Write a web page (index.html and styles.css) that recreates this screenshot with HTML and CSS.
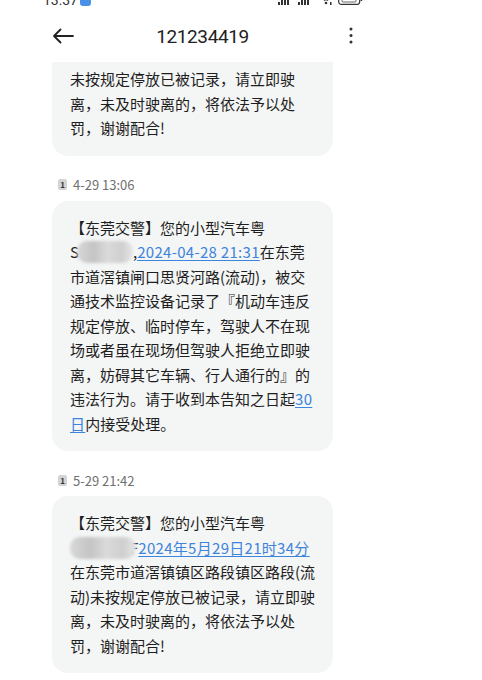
FILE: index.html
```html
<!DOCTYPE html>
<html lang="zh-CN">
  <head>
    <meta charset="UTF-8" />
    <meta name="viewport" content="width=device-width, initial-scale=1.0" />
    <title>121234419</title>
    <link rel="stylesheet" href="styles.css">
  </head>
  <body>
    <div class="screen">
      <div class="status">
        <span class="time">13:37</span>
        <span class="notif"></span>
        <span class="grow"></span>
        <svg class="sig" width="38" height="12" viewBox="0 0 38 12">
          <rect x="0" y="9" width="2" height="3" />
          <rect x="3" y="7" width="2" height="5" />
          <rect x="6" y="4" width="2" height="8" />
          <rect x="9" y="1" width="2" height="11" />
          <rect x="20" y="9" width="2" height="3" />
          <rect x="23" y="7" width="2" height="5" />
          <rect x="26" y="4" width="2" height="8" />
          <rect x="29" y="1" width="2" height="11" />
        </svg>
        <svg class="wifi" width="12" height="12" viewBox="0 0 12 12">
          <path d="M1 5 Q5 1 9 5 M3 7.5 Q5 5.5 7 7.5" fill="none" stroke="#333" stroke-width="1.5" />
          <circle cx="5" cy="10" r="1.3" fill="#333" />
          <rect x="9" y="9" width="1.5" height="3" fill="#333" />
        </svg>
        <svg class="batt" width="25" height="12" viewBox="0 0 25 12">
          <rect x="0.7" y="0.7" width="21" height="10.6" rx="2.5" fill="none" stroke="#333" stroke-width="1.2" />
          <rect x="4" y="3" width="14" height="6" rx="1" fill="none" stroke="#666" stroke-width="1" />
          <rect x="22.6" y="4" width="1.6" height="4" fill="#333" />
        </svg>
      </div>

      <header class="bar">
        <svg class="back" width="22" height="16" viewBox="0 0 22 16">
          <path d="M21 8 H2 M8.5 1.5 L2 8 L8.5 14.5" fill="none" stroke="#222" stroke-width="1.8" stroke-linecap="round" stroke-linejoin="round" />
        </svg>
        <h1>121234419</h1>
        <svg class="more" width="4" height="18" viewBox="0 0 4 18">
          <circle cx="2" cy="2" r="1.5" />
          <circle cx="2" cy="8.5" r="1.5" />
          <circle cx="2" cy="15" r="1.5" />
        </svg>
      </header>

      <div class="thread">
        <div class="bubble first">
          未按规定停放已被记录，请立即驶离，未及时驶离的，将依法予以处罚，谢谢配合!
        </div>

        <div class="stamp"><span class="sim">1</span>4-29 13:06</div>

        <div class="bubble">
          【东莞交警】您的小型汽车粤<span class="plate">S<span class="blur"></span>,</span><a href="#">2024-04-28 21:31</a>在东莞市道滘镇闸口思贤河路(流动)，被交通技术监控设备记录了『机动车违反规定停放、临时停车，驾驶人不在现场或者虽在现场但驾驶人拒绝立即驶离，妨碍其它车辆、行人通行的』的违法行为。请于收到本告知之日起<a href="#">30日</a>内接受处理。
        </div>

        <div class="stamp"><span class="sim">1</span>5-29 21:42</div>

        <div class="bubble">
          【东莞交警】您的小型汽车粤<span class="plate"><span class="blur wide"></span>F</span><a href="#">2024年5月29日21时34分</a>在东莞市道滘镇镇区路段镇区路段(流动)未按规定停放已被记录，请立即驶离，未及时驶离的，将依法予以处罚，谢谢配合!
        </div>
      </div>
    </div>
  </body>
</html>
```

FILE: styles.css
```css
body {
  margin: 0;
  background: #fff;
  font-family: "Noto Sans CJK SC", "Noto Sans", sans-serif;
  color: #1e1e1e;
}
.screen {
  width: 410px;
  height: 680px;
  overflow: hidden;
}
.status {
  display: flex;
  align-items: flex-end;
  height: 6px;
  overflow: hidden;
  padding: 0 47px 0 43px;
}
.status svg {
  flex: none;
  margin-bottom: 1px;
}
.time {
  font-family: Roboto, sans-serif;
  font-size: 14px;
  line-height: 12px;
  color: #333;
}
.notif {
  width: 11px;
  height: 11px;
  margin: 0 0 0 2px;
  border-radius: 3px;
  background: #4a8fe8;
}
.grow {
  flex: 1;
}
.sig {
  fill: #333;
  margin-right: 5px;
}
.wifi {
  margin-right: 5px;
}
.bar {
  display: grid;
  grid-template-columns: 1fr auto 1fr;
  align-items: center;
  height: 56px;
  padding: 4px 57px 0 52px;
  box-sizing: border-box;
}
.bar h1 {
  margin: 0;
  font-family: Roboto, sans-serif;
  font-weight: 400;
  font-size: 19px;
  letter-spacing: -0.4px;
  color: #222;
}
.more {
  justify-self: end;
  fill: #333;
}
.thread {
  overflow: hidden;
  height: 618px;
}
.bubble {
  width: 281px;
  margin-left: 52px;
  box-sizing: border-box;
  padding: 15px 17px 15px 18px;
  border-radius: 16px;
  background: #f4f5f5;
  font-size: 15px;
  line-height: 24.5px;
}
.bubble.first {
  margin-top: -10px;
  border-top-left-radius: 0;
  border-top-right-radius: 0;
}
.bubble a {
  color: #3d84dc;
  letter-spacing: 0.3px;
  text-decoration: underline;
  text-underline-offset: 2px;
}
.plate {
  white-space: nowrap;
}
.blur {
  display: inline-block;
  position: relative;
  width: 56px;
  height: 22px;
  margin-left: -2px;
  vertical-align: -5px;
  border-radius: 10px;
  background: linear-gradient(90deg, #d8d8d8, #c4c4c4 30%, #dadada 55%, #cfcfcf 80%, #e6e6e6);
  filter: blur(1.5px);
}
.blur.wide {
  width: 66px;
  margin-left: 0;
  margin-right: -6px;
}
.stamp {
  display: flex;
  align-items: center;
  gap: 6px;
  height: 18px;
  margin: 20px 0 7px 58px;
  font-size: 13px;
  color: #707070;
}
.sim {
  width: 9px;
  height: 11px;
  border-radius: 2px;
  background: #d4d4d4;
  color: #333;
  font-size: 8px;
  line-height: 11px;
  text-align: center;
  font-weight: 700;
}
```
